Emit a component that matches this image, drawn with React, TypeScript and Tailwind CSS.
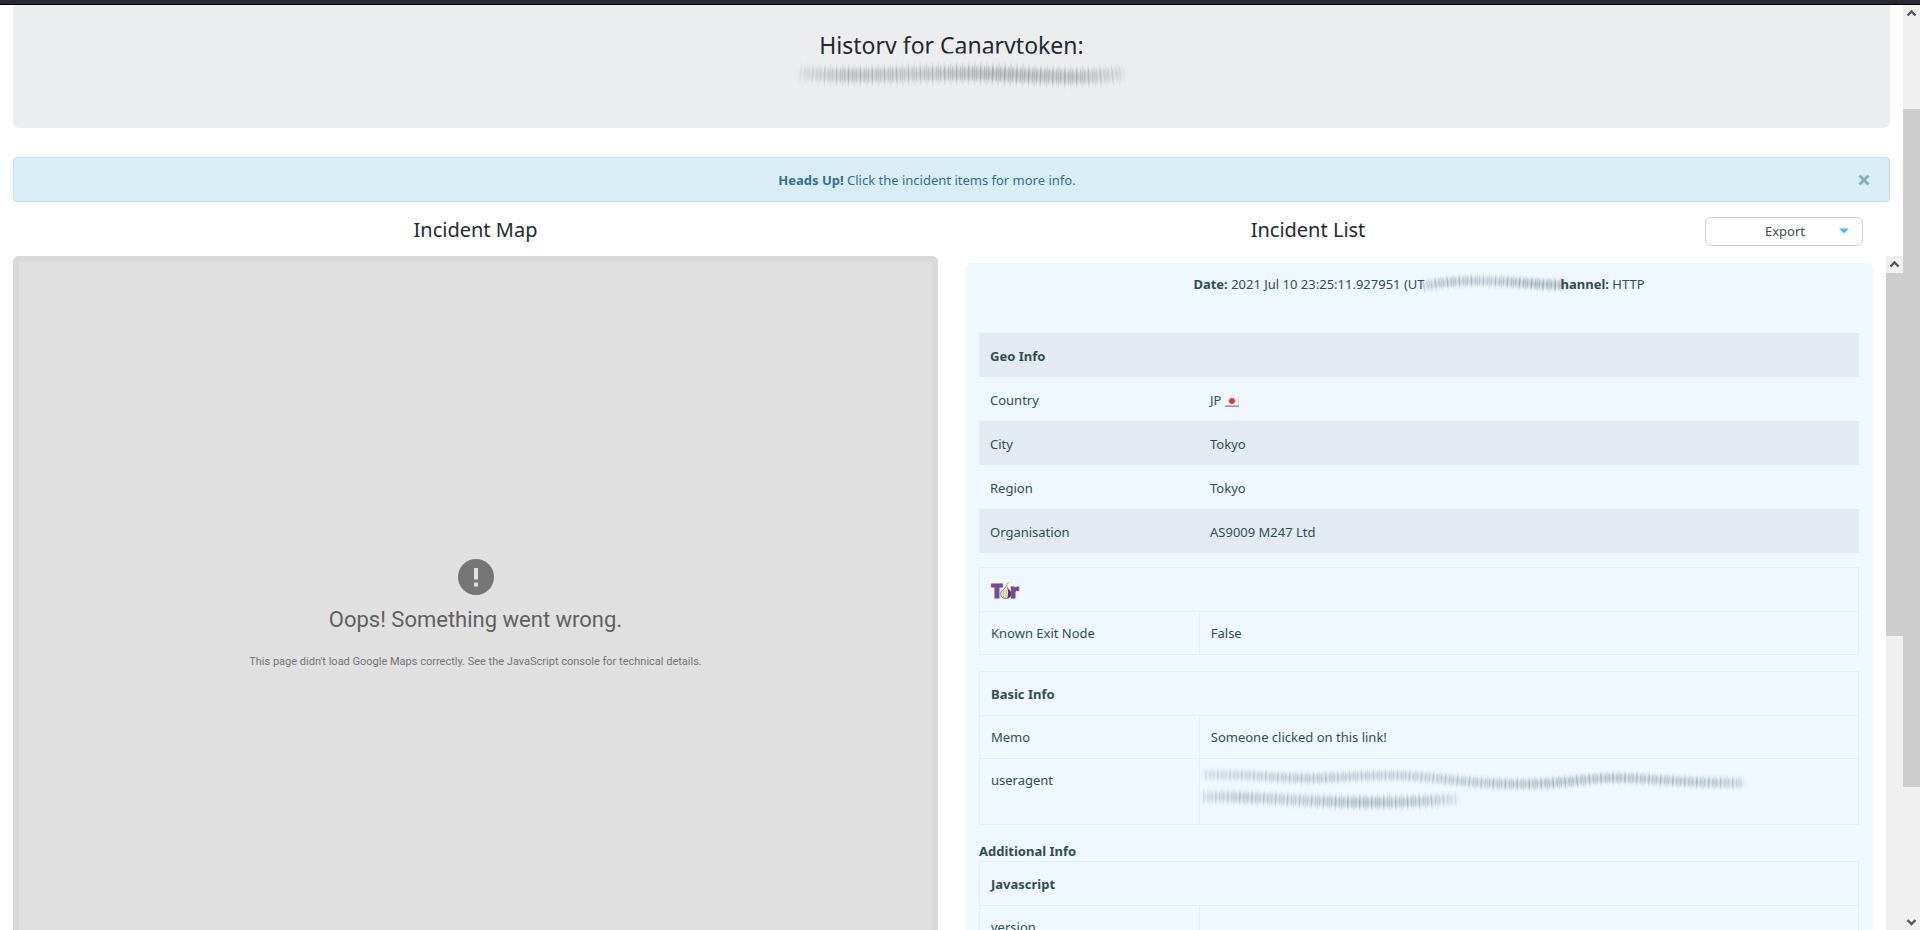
import type { ReactNode } from "react";

function Chevron({ down = false }: { down?: boolean }) {
  return (
    <svg width="17" height="17" viewBox="0 0 17 17" aria-hidden="true" className="block">
      <path
        d={down ? "M4.500 7l4 4 4-4" : "M4.500 10.500l4-4 4 4"}
        fill="none"
        stroke="#555"
        strokeWidth="2.400"
      />
    </svg>
  );
}

type SmearProps = {
  id: string;
  width: number;
  height: number;
  paths: { d: string; thick: number; fadeStart: number; fadeEnd: number }[];
  color: string;
  cover?: { d: string; fill: string };
};

function Smear({ id, width, height, paths, color, cover }: SmearProps) {
  return (
    <svg
      width={width}
      height={height}
      viewBox={`0 0 ${width} ${height}`}
      aria-hidden="true"
      className="block overflow-visible"
    >
      <defs>
        <filter id={`${id}-soft`} filterUnits="userSpaceOnUse" x="-20" y="-20" width={width + 40} height={height + 40}>
          <feGaussianBlur stdDeviation="4 2.5" />
        </filter>
        <filter id={`${id}-fine`} filterUnits="userSpaceOnUse" x="-20" y="-20" width={width + 40} height={height + 40}>
          <feGaussianBlur stdDeviation="0.5 1.2" />
        </filter>
        {paths.map((p, i) => (
          <linearGradient key={p.d} id={`${id}-g${i}`} gradientUnits="userSpaceOnUse" x1="0" x2={p.fadeEnd} y1="0" y2="0">
            <stop offset="0" stopColor={color} stopOpacity={p.fadeStart} />
            <stop offset="0.15" stopColor={color} stopOpacity="0.7" />
            <stop offset="0.35" stopColor={color} stopOpacity="0.6" />
            <stop offset="0.6" stopColor={color} stopOpacity="0.9" />
            <stop offset="0.85" stopColor={color} stopOpacity="0.75" />
            <stop offset="1" stopColor={color} stopOpacity="0.25" />
          </linearGradient>
        ))}
      </defs>
      {cover && <path d={cover.d} fill={cover.fill} />}
      {paths.map((p, i) => (
        <g key={p.d} fill="none" stroke={`url(#${id}-g${i})`}>
          <path d={p.d} strokeWidth={p.thick * 0.7} opacity="0.4" filter={`url(#${id}-soft)`} />
          <path d={p.d} strokeWidth={p.thick} strokeDasharray="1.500 2.500" opacity="0.3" filter={`url(#${id}-fine)`} />
          <path d={p.d} strokeWidth={p.thick * 1.5} strokeDasharray="1.500 4.500" opacity="0.2" filter={`url(#${id}-fine)`} />
        </g>
      ))}
    </svg>
  );
}

function TorLogo() {
  return (
    <svg width="28" height="18" viewBox="0 0 28 18" role="img" aria-label="Tor" className="block overflow-visible">
      <g
        fill="#7d4698"
        stroke="#7d4698"
        strokeWidth="1"
        fontFamily="Open Sans, Noto Sans, sans-serif"
        fontWeight="800"
      >
        <text x="0" y="16.500" fontSize="20">
          T
        </text>
        <text x="19" y="16.500" fontSize="19">
          r
        </text>
      </g>
      <path
        d="M15 5.500c-.6 2.200-5.500 3.400-5.500 7.300 0 3 2.500 4.700 5.300 4.700s5.200-1.700 5.200-4.700c0-3.900-4.300-5-4-7.300z"
        fill="#e9e5c8"
        stroke="#6a6a58"
        strokeWidth="0.7"
      />
      <path d="M16 6c0 2 4 3.200 4 6.800 0 2.900-1.800 4.300-3.800 4.700 1.400-3.500 1.200-7.700-.2-11.500z" fill="#5b2d74" />
      <path
        d="M14 8.500c-2.500 3-2.500 6-.6 8.700M14.800 8.500c.8 3 .8 6-.2 8.700"
        fill="none"
        stroke="#a5a28a"
        strokeWidth="0.6"
      />
      <path d="M14.500 6c.2-2.500 1.300-4.300 3.900-5.500-.6 1.300-.8 1.700-1.300 2.300C16.400 3.800 16.200 4.700 16.200 6z" fill="#b3d334" />
    </svg>
  );
}

function Flag() {
  return (
    <svg width="14" height="11" viewBox="0 0 14 11" role="img" aria-label="Japan" className="inline-block">
      <rect width="14" height="10" fill="#f8f8f8" />
      <rect x="13" width="1" height="10" fill="#d9dce2" />
      <rect y="9.500" width="14" height="1.200" fill="#6a6fc0" />
      <circle cx="7" cy="5" r="3" fill="#f5302f" />
    </svg>
  );
}

const geo: [string, ReactNode][] = [
  ["Country", <>JP <Flag /></>],
  ["City", "Tokyo"],
  ["Region", "Tokyo"],
  ["Organisation", "AS9009 M247 Ltd"],
];

function Columns() {
  return (
    <colgroup>
      <col className="w-1/4" />
      <col />
    </colgroup>
  );
}

function BorderedTable({ title, rows }: { title: ReactNode; rows: [string, ReactNode][] }) {
  return (
    <table className="w-full table-fixed border-collapse text-left">
      <Columns />
      <thead>
        <tr className="h-11">
          <th colSpan={2} className="border border-[#e8edf2] px-[11px] py-0 font-bold">
            {title}
          </th>
        </tr>
      </thead>
      <tbody>
        {rows.map(([name, value]) => (
          <tr key={name} className="align-top">
            <td className="border border-[#e8edf2] px-[11px] py-[11px]">{name}</td>
            <td className="border border-[#e8edf2] px-[11px] py-[11px]">{value}</td>
          </tr>
        ))}
      </tbody>
    </table>
  );
}

export default function App() {
  return (
    <div className="flex h-screen flex-col overflow-hidden bg-white font-['Noto_Sans','Open_Sans',sans-serif] text-[13px] leading-5 text-[#2f4f4f]">
      <div className="h-[5px] shrink-0 border-b border-black bg-[#2b2a33]" />
      <div className="flex min-h-0 flex-1">
        <main className="flex min-w-0 flex-1 flex-col pl-[13px]">
          <header className="mr-[13px] flex h-[123px] shrink-0 flex-col items-center rounded-b-md bg-[#ecedef] pt-6">
            <h1 className="text-[23px] leading-8 text-[#24292e]">History for Canarytoken:</h1>
            <div className="relative pl-5">
              <Smear
                id="token"
                width={328}
                height={36}
                color="#777b7e"
                cover={{ d: "M20-6 C100-8 240-8 300-6 V14 H20z", fill: "#ecedef" }}
                paths={[
                  { d: "M2 12 C60 18 130 10 200 13 S290 18 326 12", thick: 15, fadeStart: 0.2, fadeEnd: 328 },
                ]}
              />
            </div>
          </header>

          <div
            role="alert"
            className="mt-[29px] mr-[13px] flex h-[45px] shrink-0 items-center gap-[14px] rounded border border-[#bce0ee] bg-[#d9edf7] pr-[15px] text-[#31708f]"
          >
            <p className="flex-1 text-center">
              <strong>Heads Up!</strong> Click the incident items for more info.
            </p>
            <button type="button" aria-label="Close" className="flex size-5 items-center justify-center">
              <svg width="12" height="12" viewBox="0 0 12 12" aria-hidden="true">
                <path d="M1.500 1.500l9 9M10.500 1.500l-9 9" stroke="#86afc3" strokeWidth="3" />
              </svg>
            </button>
          </div>

          <div className="grid min-h-0 flex-1 grid-cols-[925fr_938fr] gap-x-[27px]">
            <section className="flex min-h-0 flex-col">
              <h2 className="flex h-[54px] shrink-0 items-center justify-center pt-px text-xl text-[#24292e]">
                Incident Map
              </h2>
              <div className="flex flex-1 flex-col items-center rounded-t-md border-x-6 border-t-6 border-[#d9d9d9] bg-[#e0e0e0] pt-[297px] font-[Roboto,sans-serif]">
                <svg width="36" height="36" viewBox="0 0 36 36" aria-hidden="true">
                  <circle cx="18" cy="18" r="18" fill="#757575" />
                  <path d="M16 9h4v11.500h-4zM16 23.500h4v4h-4z" fill="#e0e0e0" />
                </svg>
                <h3 className="mt-[13px] text-[22px] leading-6 text-[#616161]">Oops! Something went wrong.</h3>
                <p className="mt-5 text-[11px] text-[#757575]">
                  This page didn't load Google Maps correctly. See the JavaScript console for technical details.
                </p>
              </div>
            </section>

            <section className="flex min-h-0 flex-col">
              <div className="flex h-[54px] shrink-0 items-center">
                <h2 className="flex-1 pt-px text-center text-xl text-[#24292e]">Incident List</h2>
                <button
                  type="button"
                  aria-haspopup="menu"
                  className="mt-1 mr-10 ml-[54px] flex h-[29px] w-[158px] items-center rounded-md border border-[#d0d0d0] bg-white pr-3 pl-[26px] text-[#404a4f]"
                >
                  <span className="flex-1">Export</span>
                  <svg width="12" height="6" viewBox="0 0 12 6" aria-hidden="true">
                    <path d="M1 0.500h10L6 5.500z" fill="#4cb8ff" />
                  </svg>
                </button>
              </div>

              <div className="flex min-h-0 flex-1">
                <div className="min-w-0 flex-1 overflow-hidden pt-[7px] pr-[13px]">
                  <article className="rounded-t-md bg-[#eff7ff] px-[14px] pt-[11px] pb-10">
                    <div className="mb-[39px] flex justify-center">
                      <span>
                        <strong>Date:</strong> 2021 Jul 10 23:25:11.927951 (UT
                      </span>
                      <span className="-ml-1 w-[144px] shrink-0">
                        <Smear
                          id="date"
                          width={144}
                          height={20}
                          color="#5f7276"
                          paths={[
                            { d: "M2 12 C30 6 60 6 90 8 S120 11 144 11", thick: 9, fadeStart: 0.6, fadeEnd: 190 },
                          ]}
                        />
                      </span>
                      <span className="-ml-1">
                        <strong>hannel:</strong> HTTP
                      </span>
                    </div>

                    <table className="w-full table-fixed border-collapse text-left">
                      <Columns />
                      <thead>
                        <tr className="h-11 bg-[#e3eaf2]">
                          <th colSpan={2} className="px-[11px] pt-px pb-0 font-bold">
                            Geo Info
                          </th>
                        </tr>
                      </thead>
                      <tbody>
                        {geo.map(([name, value]) => (
                          <tr key={name} className="h-11 even:bg-[#e3eaf2]">
                            <td className="px-[11px] pt-px pb-0">{name}</td>
                            <td className="px-[11px] pt-px pb-0">{value}</td>
                          </tr>
                        ))}
                      </tbody>
                    </table>

                    <div className="mt-[14px]">
                      <BorderedTable title={<TorLogo />} rows={[["Known Exit Node", "False"]]} />
                    </div>

                    <div className="mt-4">
                      <BorderedTable
                        title="Basic Info"
                        rows={[
                          ["Memo", "Someone clicked on this link!"],
                          [
                            "useragent",
                            <div key="agent" className="-ml-2 h-[43px] pt-px">
                              <Smear
                                id="agent"
                                width={545}
                                height={42}
                                color="#75878c"
                                paths={[
                                  {
                                    d: "M2 4 C60 3 80 9 120 7 S190 2 240 8 S330 15 380 9 S450 12 540 12",
                                    thick: 9,
                                    fadeStart: 0.4,
                                    fadeEnd: 600,
                                  },
                                  {
                                    d: "M0 26 C50 25 90 30 140 31 S210 31 255 28",
                                    thick: 11,
                                    fadeStart: 0.4,
                                    fadeEnd: 260,
                                  },
                                ]}
                              />
                            </div>,
                          ],
                        ]}
                      />
                    </div>

                    <h4 className="mt-4 font-bold">Additional Info</h4>
                    <BorderedTable title="Javascript" rows={[["version", ""]]} />
                  </article>
                </div>
                <div className="w-[17px] shrink-0 bg-[#f0f0f0]">
                  <Chevron />
                  <div className="h-[363px] bg-[#cdcdcd]" />
                </div>
              </div>
            </section>
          </div>
        </main>
        <div className="flex w-[17px] shrink-0 flex-col bg-[#f0f0f0]">
          <Chevron />
          <div className="mt-[87px] h-[678px] bg-[#cdcdcd]" />
          <div className="mt-auto">
            <Chevron down />
          </div>
        </div>
      </div>
    </div>
  );
}
